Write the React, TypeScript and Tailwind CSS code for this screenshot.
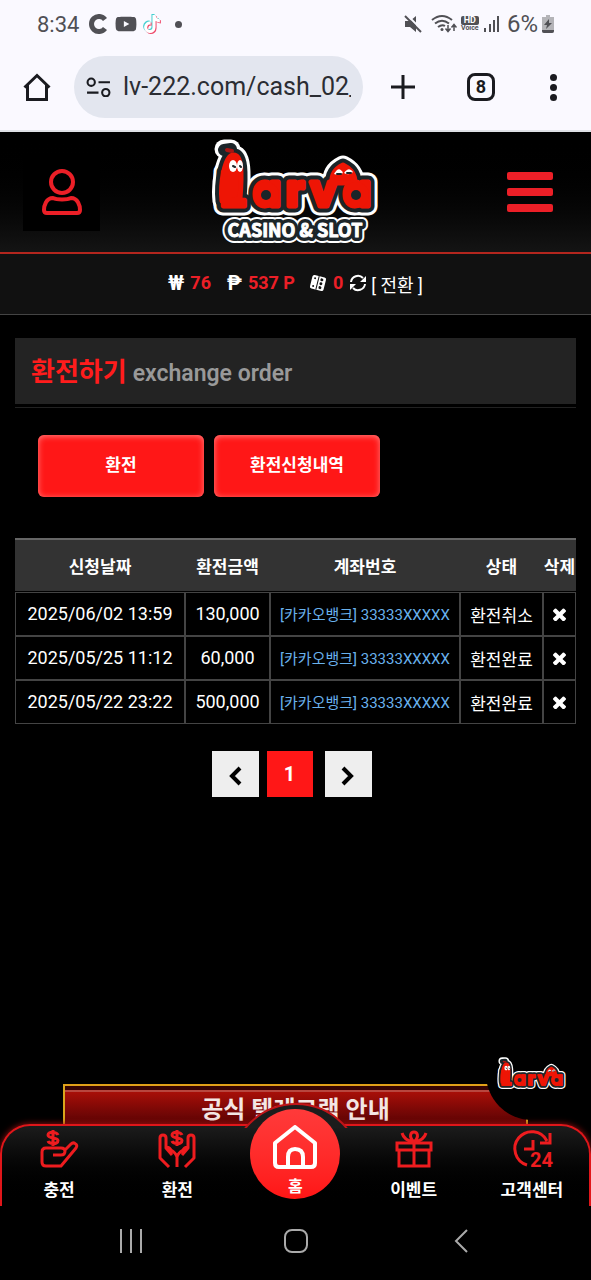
import { useId } from "react";
import { FaTiktok, FaYoutube } from "react-icons/fa";

interface Order {
  date: string;
  amount: string;
  account: string;
  status: string;
}

const orders: Order[] = [
  {
    date: "2025/06/02 13:59",
    amount: "130,000",
    account: "[카카오뱅크] 33333XXXXX",
    status: "환전취소",
  },
  {
    date: "2025/05/25 11:12",
    amount: "60,000",
    account: "[카카오뱅크] 33333XXXXX",
    status: "환전완료",
  },
  {
    date: "2025/05/22 23:22",
    amount: "500,000",
    account: "[카카오뱅크] 33333XXXXX",
    status: "환전완료",
  },
];

const LarvaLogo = ({
  className,
  tagline,
}: {
  className: string;
  tagline?: string;
}) => {
  const id = useId();
  return (
    <svg
      viewBox={tagline ? "0 0 170 106" : "0 0 170 82"}
      className={className}
      strokeLinejoin="round"
      strokeLinecap="round"
      aria-label="Larva"
    >
      <use href={`#${id}word`} fill="#fff" stroke="#fff" strokeWidth="19" />
      <path d="M13 10 L20 10" stroke="#fff" strokeWidth="19" />
      {tagline && (
        <use href={`#${id}tag`} fill="#fff" stroke="#fff" strokeWidth="12" />
      )}
      <use
        href={`#${id}word`}
        fill="#1c2529"
        stroke="#1c2529"
        strokeWidth="13"
      />
      <path d="M13 11 L20 10" stroke="#1c2529" strokeWidth="12" />
      {tagline && (
        <use
          href={`#${id}tag`}
          fill="#1c2529"
          stroke="#1c2529"
          strokeWidth="8"
        />
      )}
      <g fill="#ee1505" stroke="#ee1505" strokeWidth="5">
        <g id={`${id}word`}>
          <path d="M11 62 C9 44 14 17 22 16 C31 15 31 34 29 60 Z" />
          <path d="M121 44 C120 34 126 29 132 26 C138 29 144 33 144 44 Z" />
          <text
            y="67"
            className="font-['Inter',sans-serif] text-[44px] font-bold [font-feature-settings:'cv11']"
          >
            <tspan x="9" className="text-[46px]">
              L
            </tspan>
            <tspan x="42">a</tspan>
            <tspan x="75">r</tspan>
            <tspan x="99">v</tspan>
            <tspan x="132">a</tspan>
          </text>
        </g>
      </g>
      {/* bowls of the two letters, curl on the head, eyes of both worms */}
      <g fill="#ee1505">
        <circle cx="55" cy="56" r="13" />
        <circle cx="145" cy="56" r="13" />
      </g>
      <g fill="#1c2529">
        <circle cx="55" cy="56" r="5" />
        <circle cx="145" cy="56" r="5" />
      </g>
      <path
        d="M16 11 L21 12"
        fill="none"
        stroke="#a81512"
        strokeWidth="4"
      />
      <g fill="#fff">
        <ellipse cx="22" cy="27" rx="4" ry="6" />
        <ellipse cx="29" cy="27" rx="3" ry="6" />
        <path d="M123 35 q5 -9 9 -1 q-4 3 -9 1z" />
        <path d="M133 34 q5 -7 9 -1 q-4 4 -9 1z" />
      </g>
      <path
        d="M22 27 l2 1 M29 27 l1 1 M126 35 l4 0 M140 34 l-4 0"
        stroke="#1c2529"
        strokeWidth="2"
      />
      {tagline && (
        <g fill="#fff" stroke="#fff" strokeWidth="1">
          <text
            id={`${id}tag`}
            x="84"
            y="98"
            textAnchor="middle"
            className="font-['Noto_Sans_CJK_KR',sans-serif] text-[18px] font-bold"
          >
            {tagline}
          </text>
        </g>
      )}
    </svg>
  );
};

const StatusBar = () => (
  <div className="flex h-12 items-center justify-between pr-[37px] pl-[37px] text-[#505055]">
    <div className="flex items-center gap-1.5">
      <span className="text-[22px]">8:34</span>
      <svg viewBox="0 0 20 20" className="ml-1 size-5">
        <path
          d="M16 5.500 A7.500 7.500 0 1 0 16 14.500"
          fill="none"
          stroke="currentColor"
          strokeWidth="5"
        />
      </svg>
      <FaYoutube className="size-[22px]" />
      <FaTiktok className="size-[18px] text-white [filter:drop-shadow(1px_1px_0_#ee4a6b)_drop-shadow(-1px_-1px_0_#45cfd0)]" />
      <span className="ml-2 size-[7px] rounded-full bg-[#505055]" />
    </div>
    <div className="flex items-center gap-1">
      <svg viewBox="0 0 20 20" className="mr-1 size-5">
        <path d="M2 7h5l6-5v16l-6-5H2z" fill="currentColor" />
        <path d="M3 0L20 17" stroke="#faf9ff" strokeWidth="2" />
        <path d="M2 2L18 18" stroke="currentColor" strokeWidth="2" />
      </svg>
      <svg viewBox="0 0 26 20" className="w-[26px]" fill="none">
        <g stroke="currentColor" strokeWidth="2">
          <path d="M1 6 Q11 -2 21 6 M4 9.500 Q11 4 18 9.500 M7 13 Q11 10 14 12" />
          <path
            d="M17 11 v6 M14.500 14.500 l2.500 3 2.500 -3 M23 17 v-6 M20.500 13.500 l2.500 -3 2.500 3"
            strokeWidth="1.500"
          />
        </g>
        <circle cx="11" cy="15.500" r="1.500" fill="currentColor" />
      </svg>
      <span className="flex flex-col items-center font-bold">
        <span className="rounded-xs bg-[#505055] px-[3px] text-[9px] leading-[9px] text-white">
          HD
        </span>
        <span className="text-[7px] leading-[7px]">Voice</span>
      </span>
      <svg viewBox="0 0 18 18" className="size-[18px]" fill="currentColor">
        <rect x="1" y="13" width="2" height="4" />
        <rect x="6" y="9" width="2" height="8" />
        <rect x="10" y="5" width="2" height="12" />
        <rect x="14" y="1" width="2" height="16" />
      </svg>
      <span className="ml-0.5 text-2xl">6%</span>
      <svg viewBox="0 0 12 18" className="h-[18px] w-3">
        <path d="M4 0h4v2h4v14q0 2-2 2H2q-2 0-2-2V2h4z" fill="#b4b4b8" />
        <path d="M0 15h12v1q0 2-2 2H2q-2 0-2-2z" fill="#505055" />
        <path d="M7 4L2 10h3l-1 4 6-6H7z" fill="#505055" />
      </svg>
    </div>
  </div>
);

const AddressBar = () => (
  <div className="flex items-center pt-2 pr-8 pb-3 pl-[23px] text-[#1a1b20]">
    <button type="button" aria-label="Home page">
      <svg
        viewBox="0 0 28 28"
        className="size-7"
        fill="none"
        stroke="currentColor"
        strokeWidth="3"
      >
        <path d="M1.500 14.500 L14 2.500 L26.500 14.500 M4.500 12 V26.500 H23.500 V12" />
      </svg>
    </button>
    <label className="ml-[23px] flex h-[62px] min-w-0 flex-1 items-center gap-3 rounded-full bg-[#e3e6ef] pr-3 pl-3">
      <svg
        viewBox="0 0 24 20"
        className="w-[25px] shrink-0"
        fill="none"
        stroke="currentColor"
        strokeWidth="2"
      >
        <circle cx="5" cy="5" r="3.500" />
        <path d="M12 5h11M1 15h11" />
        <circle cx="19" cy="15" r="3.500" />
      </svg>
      <input
        type="text"
        readOnly
        aria-label="Address"
        value="lv-222.com/cash_02_"
        className="w-full min-w-0 bg-transparent text-[25px] text-[#2b2d33] outline-none"
      />
    </label>
    <button type="button" aria-label="New tab" className="ml-7">
      <svg viewBox="0 0 24 24" className="size-6">
        <path d="M12 0v24M0 12h24" stroke="currentColor" strokeWidth="3" />
      </svg>
    </button>
    <button
      type="button"
      className="ml-[52px] size-7 rounded-lg border-[3px] border-[#1a1b20] text-[18px] leading-[22px] font-bold"
    >
      8
    </button>
    <button
      type="button"
      aria-label="Menu"
      className="ml-[52px] flex w-3 flex-col items-center gap-[3px]"
    >
      <span className="size-[7px] rounded-full bg-[#1a1b20]" />
      <span className="size-[7px] rounded-full bg-[#1a1b20]" />
      <span className="size-[7px] rounded-full bg-[#1a1b20]" />
    </button>
  </div>
);

const SiteHeader = () => (
  <header>
    <div className="flex h-[122px] items-center justify-between border-b-2 border-[#b3261e] bg-linear-to-b from-black to-[#141414] px-[23px]">
      <button
        type="button"
        aria-label="My page"
        className="flex size-[77px] items-center justify-center bg-black"
      >
        <svg
          viewBox="0 0 42 48"
          className="w-[42px]"
          fill="none"
          stroke="#ec1f27"
          strokeWidth="4"
          strokeLinejoin="round"
        >
          <circle cx="21" cy="14" r="11" />
          <path d="M12 30 C16 32 26 32 30 30 C37 30 39 38 39 42 Q39 45 36 45 H6 Q3 45 3 42 C3 38 5 30 12 30 Z" />
        </svg>
      </button>
      <LarvaLogo className="w-[170px]" tagline="CASINO & SLOT" />
      <button
        type="button"
        aria-label="Open menu"
        className="flex w-[77px] flex-col items-center gap-2"
      >
        <span className="h-2 w-[46px] rounded-xs bg-[#ec1f27]" />
        <span className="h-2 w-[46px] rounded-xs bg-[#ec1f27]" />
        <span className="h-2 w-[46px] rounded-xs bg-[#ec1f27]" />
      </button>
    </div>
    <div className="flex h-[61px] items-center justify-center gap-1.5 border-b border-[#444] bg-[#111] pb-0.5 text-lg font-bold text-[#ec1f27]">
      <span className="text-xl text-white">₩</span>
      <span>76</span>
      <span className="ml-2.5 text-xl text-white">₱</span>
      <span>537 P</span>
      <svg viewBox="0 0 18 18" className="ml-2 size-[18px]">
        <g transform="rotate(14 9 9)">
          <rect x="2" y="2" width="14" height="14" rx="2" fill="#fff" />
          <path d="M8.500 2v14" stroke="#111" />
          <g fill="#111">
            <circle cx="5" cy="5" r="1" />
            <circle cx="5" cy="13" r="1" />
            <circle cx="12" cy="5" r="1.500" />
            <circle cx="12" cy="9" r="1.500" />
            <circle cx="12" cy="13" r="1.500" />
          </g>
        </g>
      </svg>
      <span>0</span>
      <button
        type="button"
        className="flex items-center gap-1 font-normal text-white"
      >
        <svg viewBox="0 0 18 18" className="size-[18px]">
          <path
            d="M2 8 A7 7 0 0 1 14 4 M16 10 A7 7 0 0 1 4 14"
            fill="none"
            stroke="#fff"
            strokeWidth="2"
          />
          <path d="M17 2v6h-6zM1 16v-6h6z" fill="#fff" />
        </svg>
        <span className="pt-1.5 text-lg">[ 전환 ]</span>
      </button>
    </div>
  </header>
);

const OrderTable = () => (
  <table className="w-full table-fixed border-separate border-spacing-0 text-center">
    <colgroup>
      <col className="w-[170px]" />
      <col className="w-[85px]" />
      <col className="w-[190px]" />
      <col className="w-[83px]" />
      <col className="w-[33px]" />
    </colgroup>
    <thead>
      <tr className="h-[54px] text-[17px] whitespace-nowrap text-white">
        {["신청날짜", "환전금액", "계좌번호", "상태", "삭제"].map((name) => (
          <th
            key={name}
            className="border-t-2 border-b border-t-[#666] border-b-black bg-[#333] p-0 pt-1 font-bold"
          >
            {name}
          </th>
        ))}
      </tr>
    </thead>
    <tbody>
      {orders.map((order) => (
        <tr
          key={order.date}
          className="h-11 text-lg whitespace-nowrap text-white"
        >
          <td className="border border-[#444] p-0">{order.date}</td>
          <td className="border border-[#444] p-0">{order.amount}</td>
          <td className="border border-[#444] p-0 pt-1 text-[15px] text-[#69b1ec]">
            {order.account}
          </td>
          <td className="border border-[#444] p-0 pt-1 text-[17px]">
            {order.status}
          </td>
          <td className="border border-[#444] p-0">
            <button type="button" aria-label="삭제" className="block w-full">
              <svg
                viewBox="302 238 1188 1316"
                className="mx-auto w-[13px]"
                fill="#fff"
              >
                <path d="M1490 1322q0 40-28 68l-136 136q-28 28-68 28t-68-28l-294-294-294 294q-28 28-68 28t-68-28l-136-136q-28-28-28-68t28-68l294-294-294-294q-28-28-28-68t28-68l136-136q28-28 68-28t68 28l294 294 294-294q28-28 68-28t68 28l136 136q28 28 28 68t-28 68l-294 294 294 294q28 28 28 68z" />
              </svg>
            </button>
          </td>
        </tr>
      ))}
    </tbody>
  </table>
);

const Chevron = ({ className }: { className?: string }) => (
  <svg
    viewBox="0 0 16 20"
    className={`w-4 ${className ?? ""}`}
    fill="none"
    stroke="#000"
    strokeWidth="4"
  >
    <path d="M13 2 L5 10 L13 18" />
  </svg>
);

const Pagination = () => (
  <nav className="mt-[27px] mr-2 flex justify-center gap-2">
    <button
      type="button"
      aria-label="Previous"
      className="flex h-[46px] w-[47px] items-center justify-center bg-[#eee] pt-1"
    >
      <Chevron />
    </button>
    <button
      type="button"
      className="mr-1 h-[46px] w-[46px] bg-[#ff1717] text-xl font-bold text-white"
    >
      1
    </button>
    <button
      type="button"
      aria-label="Next"
      className="flex h-[46px] w-[47px] items-center justify-center bg-[#eee] pt-1"
    >
      <Chevron className="rotate-180" />
    </button>
  </nav>
);

const TelegramBanner = () => (
  <div className="relative mx-[63px] mt-auto">
    <a
      href="#telegram"
      className="block h-10 border-x-2 border-t-2 border-x-[#d9a61c] border-t-[#e0a018] bg-linear-to-b from-[#330303] to-[#5e0505]"
    >
      <span className="mt-1 block h-[34px] border-t-2 border-[#b8463e] bg-linear-to-b from-[#a80f08] to-[#5a0404] text-center text-2xl leading-9 font-bold whitespace-nowrap text-[#f3e6e4]">
        공식 텔레그램 안내
      </span>
    </a>
    <div className="absolute -top-[56px] -right-[50px] flex size-[92px] items-center justify-center rounded-full bg-black">
      <LarvaLogo className="w-[70px]" />
    </div>
  </div>
);

const iconProps = {
  viewBox: "0 0 38 38",
  className: "size-[38px] overflow-visible",
  fill: "none",
  stroke: "#ee1c1f",
  strokeWidth: 3,
};

const Dollar = () => (
  <path d="M18 5 C17 2 8 1 8 5 C8 9 18 7 18 10.500 C18 15 9 14 8 11 M13 0 V16" />
);

const DepositIcon = () => (
  <svg {...iconProps} strokeLinejoin="round">
    <Dollar />
    <path d="M13 25 H21 Q25 25 25 21 Q25 18 21 18 H6 Q2 18 2 22 V32 Q2 36 6 36 H21 L36 18 Q38 15 35 13.500 Q33 12 31 14 L24 21" />
  </svg>
);

const WithdrawIcon = () => (
  <svg {...iconProps} strokeLinejoin="round">
    <g transform="translate(6 0)">
      <Dollar />
    </g>
    <path d="M11 37 L2 28 V8 Q2 5 5 5 Q8 5 8 8 V18 L14 25 M19 37 V27 Q18 23 13 20 Q10 16 8 18 M27 37 L36 28 V8 Q36 5 33 5 Q30 5 30 8 V18 L24 25 M19 27 Q20 23 25 20 Q28 16 30 18" />
  </svg>
);

const EventIcon = () => (
  <svg {...iconProps}>
    <path d="M4 20 V36 H34 V20 M2 13 H36 V20 H2 Z M19 13 V36" />
    <path d="M19 12 C13 6 16 2 19 2 C22 2 25 6 19 12 M7 3 Q9 10 18 12 M31 3 Q29 10 20 12" />
  </svg>
);

const SupportIcon = () => (
  <svg {...iconProps}>
    <path d="M14 35 A17 17 0 1 1 34 11 M37 3 V13 H27 M20 10 V19 H11" />
    <text
      x="17"
      y="37"
      fill="#ee1c1f"
      stroke="none"
      className="text-xl font-bold"
    >
      24
    </text>
  </svg>
);

const NavItem = ({
  label,
  children,
}: {
  label: string;
  children: React.ReactNode;
}) => (
  <a
    href="#menu"
    className="flex flex-col items-center gap-2.5 pt-1 text-[17px] leading-6 font-bold text-white"
  >
    {children}
    <span>{label}</span>
  </a>
);

const BottomNav = () => (
  <nav className="relative rounded-t-[30px] border-x-2 border-t-2 border-[#e0161a] bg-linear-to-b from-[#1c1c1c] to-black shadow-[0_0_6px_#a01010]">
    {/* raised rim behind the home button */}
    <div className="absolute -top-[23px] left-1/2 h-[25px] w-[106px] -translate-x-1/2 overflow-hidden">
      <div className="-ml-[13px] size-[132px] rounded-full border-2 border-[#c01418] bg-[#1c1c1c]" />
    </div>
    <div className="-mx-0.5 grid h-20 grid-cols-5">
      <NavItem label="충전">
        <DepositIcon />
      </NavItem>
      <NavItem label="환전">
        <WithdrawIcon />
      </NavItem>
      <a
        href="#home"
        className="relative -mt-[17px] flex size-[90px] flex-col items-center justify-self-center rounded-full bg-linear-to-b from-[#ff3a3a] to-[#ff1515] pt-4 text-base leading-6 font-bold text-white"
      >
        <svg
          viewBox="0 0 44 44"
          className="size-11"
          fill="none"
          stroke="#fff"
          strokeWidth="4"
          strokeLinejoin="round"
        >
          <path d="M2 18 L22 2 L42 18 V38 Q42 42 38 42 H6 Q2 42 2 38 Z M15 42 V32 Q15 24 22 24 Q30 24 30 32 V42" />
        </svg>
        <span className="mt-1.5">홈</span>
      </a>
      <NavItem label="이벤트">
        <EventIcon />
      </NavItem>
      <NavItem label="고객센터">
        <SupportIcon />
      </NavItem>
    </div>
  </nav>
);

const SystemNav = () => (
  <div className="relative grid h-[74px] grid-cols-3 items-center justify-items-center bg-black px-12 pb-1">
    <button type="button" aria-label="Recent apps" className="flex gap-2">
      <span className="h-6 w-0.5 bg-[#aaa]" />
      <span className="h-6 w-0.5 bg-[#aaa]" />
      <span className="h-6 w-0.5 bg-[#aaa]" />
    </button>
    <button
      type="button"
      aria-label="Home"
      className="size-6 rounded-lg border-2 border-[#aaa]"
    />
    <button type="button" aria-label="Back">
      <svg viewBox="0 0 14 24" className="h-6" fill="none">
        <path d="M13 1 L2 12 L13 23" stroke="#aaa" strokeWidth="2" />
      </svg>
    </button>
  </div>
);

const App = () => {
  return (
    <div className="flex min-h-screen flex-col overflow-x-hidden bg-black font-['Roboto','Noto_Sans_CJK_KR',sans-serif]">
      <div className="border-b-2 border-[#dfe1e6] bg-[#faf9ff]">
        <StatusBar />
        <AddressBar />
      </div>
      <SiteHeader />
      <main className="px-[15px] pt-[23px]">
        <div className="border-b border-[#222] pb-[3px]">
          <h1 className="flex h-[66px] items-center gap-1.5 bg-[#232323] px-4 pt-0.5 text-[26px] font-bold text-[#ff1c1c]">
            환전하기
            <span className="pt-1 text-[23px] font-semibold text-[#999]">
              exchange order
            </span>
          </h1>
        </div>
        <div className="mt-[27px] flex gap-[10px] px-[23px] text-[17px] font-bold text-white">
          <button
            type="button"
            className="h-[62px] w-[166px] rounded-md bg-[#ff1717] shadow-[inset_0_1px_6px_#ff8080]"
          >
            환전
          </button>
          <button
            type="button"
            className="h-[62px] w-[166px] rounded-md bg-[#ff1717] shadow-[inset_0_1px_6px_#ff8080]"
          >
            환전신청내역
          </button>
        </div>
        <div className="mt-[41px]">
          <OrderTable />
        </div>
        <Pagination />
      </main>
      <TelegramBanner />
      <BottomNav />
      <SystemNav />
    </div>
  );
};

export default App;
